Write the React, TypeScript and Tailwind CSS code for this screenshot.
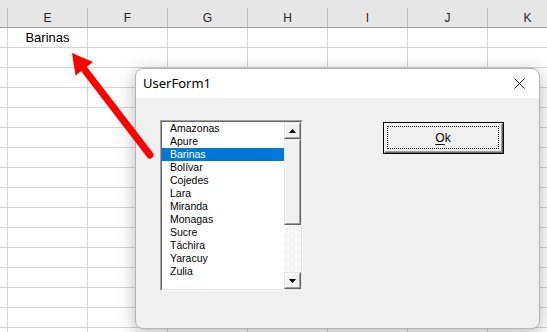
import React from "react";

const cols = ["", "E", "F", "G", "H", "I", "J", "K"];
const items = [
  "Amazonas",
  "Apure",
  "Barinas",
  "Bolívar",
  "Cojedes",
  "Lara",
  "Miranda",
  "Monagas",
  "Sucre",
  "Táchira",
  "Yaracuy",
  "Zulia",
];

function Sheet() {
  const rows = Array.from({ length: 16 }, (_, i) => i);
  return (
    <div className="flex flex-col w-[547px] h-[332px] overflow-hidden bg-white" style={{ fontFamily: '"Liberation Sans", Arial, sans-serif' }}>
      <div className="flex h-[28px] shrink-0 bg-[#e6e6e6] border-b border-[#9e9e9e]">
        {cols.map((c, i) => (
          <div key={i} className={`${i === 0 ? "w-[8px]" : "w-[80px]"} shrink-0 flex items-end`}>
            <div className="w-full h-[19px] border-r border-[#bdbdbd] flex items-center justify-center text-[12px] text-[#262626]">
              {c}
            </div>
          </div>
        ))}
      </div>
      {rows.map((r) => (
        <div key={r} className="flex h-[20px] shrink-0">
          {cols.map((_, i) => (
            <div
              key={i}
              className={`${i === 0 ? "w-[8px]" : "w-[80px]"} shrink-0 border-r border-b border-[#d4d4d4] flex items-center justify-center text-[13px] text-black`}
            >
              {r === 0 && i === 1 ? "Barinas" : ""}
            </div>
          ))}
        </div>
      ))}
    </div>
  );
}

function Tri({ up }: { up?: boolean }) {
  return (
    <svg width="7" height="4" viewBox="0 0 7 4">
      {up ? <polygon points="3.5,0 7,4 0,4" fill="#000" /> : <polygon points="0,0 7,0 3.5,4" fill="#000" />}
    </svg>
  );
}

function RaisedBox({ className, children }: { className?: string; children?: React.ReactNode }) {
  return (
    <div className={`border-t border-l border-[#e3e3e3] border-r border-b border-r-[#696969] border-b-[#696969] ${className ?? ""}`}>
      <div className="w-full h-full border-t border-l border-white border-r border-b border-r-[#a0a0a0] border-b-[#a0a0a0] bg-[#f0f0f0] flex items-center justify-center">
        {children}
      </div>
    </div>
  );
}

function ListBox() {
  return (
    <div className="w-[143px] h-[171px] border-t border-l border-[#a0a0a0] border-r border-b border-r-white border-b-white">
      <div className="w-full h-full border-t border-l border-[#696969] border-r border-b border-r-[#e3e3e3] border-b-[#e3e3e3] bg-white flex">
        <div className="flex-1 flex flex-col" style={{ fontFamily: '"Liberation Sans", Arial, sans-serif' }}>
          {items.map((it) => (
            <div
              key={it}
              className={`h-[13px] leading-[13px] text-[10.5px] pl-[8px] ${it === "Barinas" ? "bg-[#0078d7] text-white" : "text-black"}`}
            >
              {it}
            </div>
          ))}
        </div>
        <div className="w-[17px] flex flex-col">
          <RaisedBox className="h-[17px] shrink-0">
            <Tri up />
          </RaisedBox>
          <RaisedBox className="h-[86px] shrink-0" />
          <div className="flex-1 bg-[repeating-conic-gradient(#f0f0f0_0_25%,#ffffff_0_50%)] bg-[length:2px_2px]" />
          <RaisedBox className="h-[17px] shrink-0">
            <Tri />
          </RaisedBox>
        </div>
      </div>
    </div>
  );
}

function OkButton() {
  return (
    <div className="w-[121px] h-[32px] border border-black mt-[2px]">
      <div className="w-full h-full border-t border-l border-white border-r border-b border-r-[#696969] border-b-[#696969]">
        <div className="w-full h-full border-r border-b border-r-[#a0a0a0] border-b-[#a0a0a0] bg-[#f0f0f0] p-[2px]">
          <div className="w-full h-full border border-dotted border-black flex items-center justify-center text-[12px] text-[#000]" style={{ fontFamily: '"Liberation Sans", Arial, sans-serif' }}>
            <span>
              <span className="underline underline-offset-2">O</span>k
            </span>
          </div>
        </div>
      </div>
    </div>
  );
}

function Dialog() {
  return (
    <div className="absolute left-[135px] top-[68px] w-[405px] h-[261px] rounded-[8px] border border-[#b4b4b4] bg-[#f0f0f0] shadow-[0_4px_18px_rgba(0,0,0,0.28)] overflow-hidden flex flex-col">
      <div className="h-[29px] shrink-0 bg-white flex items-center justify-between pl-[7px] pr-[14px]">
        <span className="text-[13px] text-black" style={{ fontFamily: '"Noto Sans", "Open Sans", sans-serif' }}>
          UserForm1
        </span>
        <svg width="11" height="11" viewBox="0 0 11 11">
          <path d="M0.5 0.5 L10.5 10.5 M10.5 0.5 L0.5 10.5" stroke="#111" strokeWidth="1" />
        </svg>
      </div>
      <div className="flex-1 flex items-start pl-[24px] pt-[22px]">
        <ListBox />
        <div className="ml-[80px]">
          <OkButton />
        </div>
      </div>
    </div>
  );
}

function Arrow() {
  return (
    <svg className="absolute left-0 top-0 pointer-events-none" width="547" height="332" viewBox="0 0 547 332">
      <line x1="150" y1="155" x2="84" y2="69" stroke="#ff0000" strokeWidth="7" strokeLinecap="round" />
      <polygon points="72,53 93,62 75.5,75.5" fill="#ff0000" />
    </svg>
  );
}

export default function App() {
  return (
    <div className="relative w-[547px] h-[332px] overflow-hidden">
      <Sheet />
      <Dialog />
      <Arrow />
    </div>
  );
}
